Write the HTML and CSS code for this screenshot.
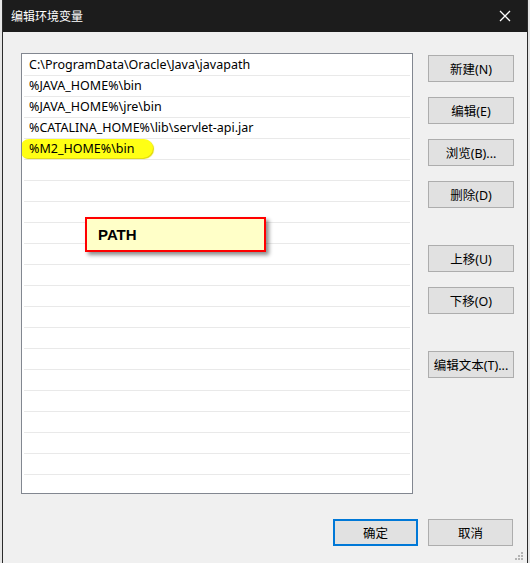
FILE: index.html
```html
<!DOCTYPE html>
<html lang="zh-CN">
<head>
<meta charset="utf-8">
<title>编辑环境变量</title>
<link rel="stylesheet" href="styles.css">
</head>
<body>
<div class="window">
  <div class="titlebar">
    <span class="title">编辑环境变量</span>
    <svg class="close" width="12" height="12" viewBox="0 0 12 12"><path d="M1 1L11 11M11 1L1 11" stroke="#fff" stroke-width="1.3" fill="none"/></svg>
  </div>
  <div class="content">
    <div class="main">
      <div class="list">
        <div class="row">C:\ProgramData\Oracle\Java\javapath</div>
        <div class="row">%JAVA_HOME%\bin</div>
        <div class="row">%JAVA_HOME%\jre\bin</div>
        <div class="row">%CATALINA_HOME%\lib\servlet-api.jar</div>
        <div class="row marked"><span class="marker"></span><span class="txt">%M2_HOME%\bin</span></div>
        <div class="row"></div><div class="row"></div><div class="row"></div><div class="row"></div>
        <div class="row"></div><div class="row"></div><div class="row"></div><div class="row"></div>
        <div class="row"></div><div class="row"></div><div class="row"></div><div class="row"></div>
        <div class="row"></div><div class="row"></div><div class="row"></div><div class="row"></div>
        <div class="note">PATH</div>
      </div>
      <div class="side">
        <button class="btn">新建(N)</button>
        <button class="btn">编辑(E)</button>
        <button class="btn">浏览(B)...</button>
        <button class="btn">删除(D)</button>
        <button class="btn sep">上移(U)</button>
        <button class="btn">下移(O)</button>
        <button class="btn sep">编辑文本(T)...</button>
      </div>
    </div>
    <div class="footer">
      <button class="btn default">确定</button>
      <button class="btn">取消</button>
    </div>
  </div>
  <svg class="grip" width="8" height="8" viewBox="0 0 8 8">
    <rect x="6" y="0" width="2" height="2" fill="#b4b4b4"/>
    <rect x="3" y="3" width="2" height="2" fill="#b4b4b4"/>
    <rect x="6" y="3" width="2" height="2" fill="#b4b4b4"/>
    <rect x="0" y="6" width="2" height="2" fill="#b4b4b4"/>
    <rect x="3" y="6" width="2" height="2" fill="#b4b4b4"/>
    <rect x="6" y="6" width="2" height="2" fill="#b4b4b4"/>
  </svg>
</div>
</body>
</html>
```
FILE: styles.css
```css
html, body {
  margin: 0;
  padding: 0;
}
body {
  width: 530px;
  height: 563px;
  background: #e6e6e6;
  overflow: hidden;
  font-family: "Noto Sans", "Noto Sans CJK SC", sans-serif;
  font-size: 12.5px;
  color: #000;
}
.window {
  position: relative;
  margin-left: 2px;
  width: 524px;
  height: 563px;
  border-left: 1px solid #2b2b2b;
  border-right: 1px solid #2b2b2b;
  background: #f0f0f0;
}
.titlebar {
  height: 32px;
  background: #1c1c1c;
  display: flex;
  align-items: center;
  justify-content: space-between;
  padding: 0 16px 0 8px;
  color: #fff;
}
.title {
  font-family: "Noto Sans CJK SC", sans-serif;
  font-size: 12px;
  margin-top: -1px;
}
.close {
  display: block;
}
.content {
  padding: 21px 0 0 18px;
}
.main {
  display: flex;
}
.list {
  position: relative;
  width: 386px;
  height: 438px;
  border: 1px solid #828790;
  background: #fff;
  padding: 1px 2px 0;
  box-sizing: content-box;
  overflow: hidden;
}
.row {
  position: relative;
  height: 20px;
  border-bottom: 1px solid #e9e9e9;
  padding-left: 5px;
  line-height: 20px;
  white-space: nowrap;
}
.marker {
  position: absolute;
  left: -3px;
  top: 0;
  width: 132px;
  height: 19px;
  background: #ffff14;
  border-radius: 8px 9px 10px 6px;
  box-shadow: 1px 1px 1px #e0d800;
}
.txt {
  position: relative;
}
.note {
  position: absolute;
  left: 63px;
  top: 163px;
  width: 166px;
  height: 31px;
  border: 2px solid #ff0000;
  background: #ffffc8;
  box-shadow: 3px 3px 4px rgba(0, 0, 0, 0.45);
  font-family: "Liberation Sans", sans-serif;
  font-weight: bold;
  font-size: 15px;
  line-height: 31px;
  padding-left: 11px;
  box-sizing: content-box;
}
.side {
  display: flex;
  flex-direction: column;
  margin-left: 15px;
  padding-top: 2px;
  gap: 15px;
}
.btn {
  width: 86px;
  height: 27px;
  margin: 0;
  padding: 0;
  border: 1px solid #adadad;
  background: #e1e1e1;
  font-family: "Noto Sans", "Noto Sans CJK SC", sans-serif;
  font-size: 12.5px;
  color: #000;
  box-sizing: border-box;
}
.btn.sep {
  margin-top: 22px;
}
.footer {
  display: flex;
  justify-content: flex-end;
  gap: 10px;
  padding-right: 14px;
  margin-top: 25px;
}
.footer .btn {
  width: 85px;
  height: 27px;
}
.btn.default {
  border: 2px solid #0078d7;
}
.grip {
  position: absolute;
  right: 4px;
  bottom: 3px;
}
```
